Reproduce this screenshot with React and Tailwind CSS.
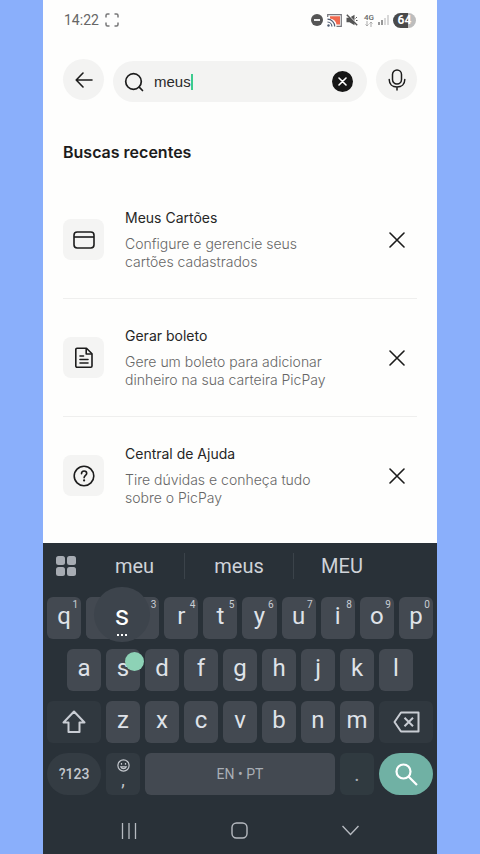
import React from 'react';

const recents = [
  { id: 'cards', title: 'Meus Cartões', lines: ['Configure e gerencie seus', 'cartões cadastrados'], Icon: CardIcon },
  { id: 'boleto', title: 'Gerar boleto', lines: ['Gere um boleto para adicionar', 'dinheiro na sua carteira PicPay'], Icon: FileIcon },
  { id: 'help', title: 'Central de Ajuda', lines: ['Tire dúvidas e conheça tudo', 'sobre o PicPay'], Icon: HelpIcon },
];

const topRow = [
  ['r', '4'], ['t', '5'], ['y', '6'], ['u', '7'], ['i', '8'], ['o', '9'], ['p', '0'],
];

function CardIcon() {
  return (
    <svg width="22" height="22" viewBox="0 0 22 22" fill="none" stroke="#1c1c1c" strokeWidth="1.6">
      <rect x="1" y="3" width="20" height="16" rx="3.2" />
      <path d="M1 8h20" />
    </svg>
  );
}

function FileIcon() {
  return (
    <svg width="22" height="22" viewBox="0 0 22 22" fill="none" stroke="#1c1c1c" strokeWidth="1.6" strokeLinejoin="round">
      <path d="M4 1.200h9.500L19 6.700V19a1.200 1.200 0 0 1-1.200 1.200H4A1.200 1.200 0 0 1 2.800 19V2.400A1.200 1.200 0 0 1 4 1.200Z" />
      <path d="M13.200 1.500V7H19" />
      <path d="M7 9h3.500M7 12.500h8M7 16h8" strokeLinecap="round" />
    </svg>
  );
}

function HelpIcon() {
  return (
    <svg width="22" height="22" viewBox="0 0 22 22" fill="none" stroke="#1c1c1c" strokeWidth="1.6">
      <circle cx="11" cy="11" r="9.8" />
      <path d="M8.500 8.700C8.500 7 9.600 6 11.100 6s2.600 1 2.600 2.400c0 1.900-2.600 2-2.600 4.300" strokeLinecap="round" />
      <circle cx="11.100" cy="15.400" r="1.100" fill="#1c1c1c" stroke="none" />
    </svg>
  );
}

function StatusBar() {
  return (
    <div className="flex h-10 items-center px-[21px] text-[#666]">
      <span className="text-[14px] leading-5">14:22</span>
      <svg className="ml-1.5" width="14" height="14" viewBox="0 0 14 14" fill="none" stroke="#777" strokeWidth="1.5">
        <path d="M1 4.500V2.500A1.500 1.500 0 0 1 2.500 1h2M9.500 1h2A1.500 1.500 0 0 1 13 2.500v2M13 9.500v2a1.500 1.500 0 0 1-1.500 1.500h-2M4.500 13h-2A1.500 1.500 0 0 1 1 11.500v-2" />
      </svg>
      <div className="ml-auto flex items-center">
        <svg width="12" height="12" viewBox="0 0 12 12">
          <circle cx="6" cy="6" r="6" fill="#555" />
          <path d="M3 6h6" stroke="#fff" strokeWidth="1.8" />
        </svg>
        <svg className="ml-1" width="15" height="13" viewBox="0 0 15 13" fill="none">
          <path d="M3 2.200h10v8.300H9.500C9 7 7 5 3 4.500Z" fill="#f0694f" />
          <path d="M.7 3V.7h13.600v11.600H9.500" stroke="#77777d" strokeWidth="1.200" />
          <path d="M.5 5.200a7.300 7.300 0 0 1 7.200 7.300M.5 8a4.500 4.500 0 0 1 4.400 4.500" stroke="#4d5a70" strokeWidth="1.200" />
          <circle cx="1.500" cy="11.500" r="1.200" fill="#4d5a70" />
        </svg>
        <svg className="ml-1" width="12" height="12" viewBox="0 0 12 12" fill="#555">
          <path d="M.5 3.800h3L8.500.8v10.400l-5-3h-3Z" />
          <path d="M1.500.5 12 11" stroke="#fff" strokeWidth="1.200" />
          <path d="M.8.8l10.400 10.400" stroke="#555" strokeWidth="1.500" />
          <path d="M9.500 4.500 11 3M10 6.500h1.500" stroke="#555" />
        </svg>
        <span className="ml-1.5 flex w-2.5 flex-col items-center text-[8px] leading-[7px] font-medium">
          4G
          <svg width="8" height="6" viewBox="0 0 8 6" fill="none" stroke="#aaa">
            <path d="M2 0v5M.5 3.500 2 5l1.500-1.500M6 6V1M4.500 2.500 6 1l1.500 1.500" />
          </svg>
        </span>
        <svg className="ml-1" width="11" height="10" viewBox="0 0 11 10">
          <path d="M1 7v3M4 5v5" stroke="#777" strokeWidth="1.500" />
          <path d="M7 3v7M10 0v10" stroke="#ccc" strokeWidth="1.500" />
        </svg>
        <span className="ml-1 flex h-[15px] w-[23px] items-center justify-center rounded-full bg-linear-to-r from-[#4a4a4a] from-64% to-[#bdbdbd] to-64% text-[12px] leading-none font-bold text-white">
          64
        </span>
      </div>
    </div>
  );
}

function SearchHeader() {
  return (
    <header className="flex items-start gap-[9px] px-5 pt-[19px]">
      <button aria-label="Voltar" className="flex size-[41px] shrink-0 items-center justify-center rounded-full bg-[#f3f3f2]">
        <svg width="18" height="16" viewBox="0 0 18 16" fill="none" stroke="#1c1c1c" strokeWidth="1.600" strokeLinecap="round" strokeLinejoin="round">
          <path d="M17 8H1.200M8 1 1.200 8 8 15" />
        </svg>
      </button>
      <div className="mt-0.5 flex h-[41px] min-w-0 flex-1 items-center rounded-full bg-[#f3f3f2] pr-3.5 pl-[11px]">
        <svg width="20" height="20" viewBox="0 0 20 20" fill="none" stroke="#1c1c1c" strokeWidth="1.700" strokeLinecap="round">
          <circle cx="9.500" cy="9.500" r="7.800" />
          <path d="m15.200 15.200 3.300 3.300" />
        </svg>
        <input
          type="text"
          aria-label="Buscar"
          defaultValue="meus"
          className="ml-2.5 field-sizing-content bg-transparent font-['Liberation_Sans',sans-serif] text-[15px] leading-5 text-[#2a2a2a] outline-none"
        />
        <span className="h-4 w-0.5 bg-[#3ccb8e]"></span>
        <button aria-label="Limpar" className="ml-auto flex size-[21px] shrink-0 items-center justify-center rounded-full bg-[#161616]">
          <svg width="9" height="9" viewBox="0 0 9 9" stroke="#fff" strokeWidth="1.600" strokeLinecap="round">
            <path d="m1 1 7 7M8 1 1 8" />
          </svg>
        </button>
      </div>
      <button aria-label="Buscar por voz" className="flex size-[41px] shrink-0 items-center justify-center rounded-full bg-[#f3f3f2]">
        <svg width="18" height="22" viewBox="0 0 18 22" fill="none" stroke="#1c1c1c" strokeWidth="1.500" strokeLinecap="round">
          <rect x="4.500" y="1" width="9" height="14" rx="4.500" />
          <path d="M1.200 10.500c0 4.600 3.200 7.500 7.800 7.500s7.800-2.900 7.800-7.500M9 18v3" />
        </svg>
      </button>
    </header>
  );
}

function RecentItem({ item }) {
  const { title, lines, Icon } = item;
  return (
    <li className="flex items-center border-b border-[#efefee] py-[27px] last:border-transparent">
      <span className="flex size-[41px] shrink-0 items-center justify-center rounded-lg bg-[#f4f4f3]">
        <Icon />
      </span>
      <div className="ml-[21px] flex-1">
        <h3 className="text-[14px] leading-5 text-[#262626]">{title}</h3>
        <p className="mt-[7px] text-[14px] leading-[18px] font-light text-[#666]">
          {lines[0]}
          <br />
          {lines[1]}
        </p>
      </div>
      <button aria-label={'Remover ' + title} className="flex size-[41px] shrink-0 items-center justify-center">
        <svg width="16" height="16" viewBox="0 0 16 16" stroke="#1c1c1c" strokeWidth="1.600" strokeLinecap="round">
          <path d="m1 1 14 14M15 1 1 15" />
        </svg>
      </button>
    </li>
  );
}

function Key({ label, hint, children }) {
  return (
    <button aria-label={label} className="relative flex h-[42px] flex-1 items-center justify-center rounded-md bg-[#434951] pb-1 text-[24px] leading-none text-[#dfe2e8]">
      {!children && label}
      {hint && <span className="absolute top-[3px] right-[3px] text-[10px] leading-none text-[#c9cdd4]">{hint}</span>}
      {children}
    </button>
  );
}

function Keyboard() {
  return (
    <section aria-label="Teclado" className="bg-[#293138] font-[Roboto,sans-serif]">
      <div className="grid h-[54px] grid-cols-[42fr_100fr_109fr_96fr_47fr] items-center pb-2 text-[20px] text-[#cfd3d9]">
        <button aria-label="Menu" className="flex justify-center pl-1">
          <svg width="20" height="20" viewBox="0 0 20 20" fill="#a7acb3">
            <rect x="0" y="0" width="9" height="9" rx="2.500" />
            <rect x="11" y="0" width="9" height="9" rx="2.500" />
            <rect x="0" y="11" width="9" height="9" rx="2.500" />
            <rect x="11" y="11" width="9" height="9" rx="2.500" />
          </svg>
        </button>
        <button className="h-[26px] border-r border-[#3b434a] leading-none">meu</button>
        <button className="h-[26px] border-r border-[#3b434a] leading-none">meus</button>
        <button className="h-[26px] leading-none">MEU</button>
      </div>

      <div className="space-y-2.5">
        <div className="grid grid-cols-10 gap-[5px] px-1">
          <Key label="q" hint="1" />
          {/* w and e sit under the popup of the pressed key */}
          <div className="relative col-span-2 flex rounded-md bg-[#434951]">
            <Key label="w">
              <span></span>
            </Key>
            <Key label="e" hint="3">
              <span></span>
            </Key>
            <span className="absolute -top-2.5 left-2 flex h-[55px] w-[56px] flex-col items-center rounded-full bg-[#3d444c] pt-[15px] text-[28px] leading-7 text-white">
              s
              <svg className="mt-1" width="12" height="2" viewBox="0 0 12 2" fill="#fff">
                <path d="M1 0h2v2H1zM5 0h2v2H5zM9 0h2v2H9z" />
              </svg>
            </span>
          </div>
          {topRow.map(([k, n]) => (
            <Key key={k} label={k} hint={n} />
          ))}
        </div>

        <div className="flex gap-[5px] px-6">
          <Key label="a" />
          <Key label="s">
            s
            <span className="absolute top-[3px] left-[19px] size-[19px] rounded-full bg-[#8dd2b6]"></span>
          </Key>
          {['d', 'f', 'g', 'h', 'j', 'k', 'l'].map((k) => (
            <Key key={k} label={k} />
          ))}
        </div>

        <div className="flex gap-[5px] px-1">
          <button aria-label="Shift" className="flex h-[42px] w-[54px] items-center justify-center rounded-md bg-[#30383f]">
            <svg width="24" height="24" viewBox="0 0 24 24" fill="none" stroke="#c9cdd4" strokeWidth="2" strokeLinejoin="round">
              <path d="M12 1.500 1.500 12.500H6.500V22h11v-9.500h5Z" />
            </svg>
          </button>
          {['z', 'x', 'c', 'v', 'b', 'n', 'm'].map((k) => (
            <Key key={k} label={k} />
          ))}
          <button aria-label="Apagar" className="flex h-[42px] w-[54px] items-center justify-center rounded-md bg-[#30383f]">
            <svg width="27" height="22" viewBox="0 0 27 22" fill="none" stroke="#c9cdd4" strokeWidth="2" strokeLinejoin="round">
              <path d="M8 1.500h17.500v19H8L1.500 11Z" />
              <path d="m11.500 6.800 8.500 8.500M20 6.800l-8.500 8.500" />
            </svg>
          </button>
        </div>

        <div className="flex gap-[5px] px-1">
          <button className="h-[42px] w-[54px] rounded-full bg-[#343c43] text-[14px] font-medium text-[#c3c7cd]">?123</button>
          <button aria-label="Emoji" className="flex h-[42px] w-[34px] flex-col items-center rounded-md bg-[#323a41] pt-1.5 text-[18px] leading-4 text-[#c3c7cd]">
            <svg width="13" height="13" viewBox="0 0 13 13" fill="none" stroke="#c3c7cd" strokeWidth="1.200">
              <circle cx="6.500" cy="6.500" r="5.600" />
              <path d="M3.700 7.800c.5 1.200 1.500 1.900 2.800 1.900s2.300-.7 2.800-1.900Z" />
              <path d="M4.500 4v1.700M8.500 4v1.700" />
            </svg>
            ,
          </button>
          <button className="h-[42px] flex-1 rounded-md bg-[#434951] text-[14px] text-[#a9aeb5]">EN • PT</button>
          <button className="h-[42px] w-[34px] rounded-md bg-[#303a40] text-[20px] text-[#a9aeb5]">.</button>
          <button aria-label="Pesquisar" className="flex h-[42px] w-[54px] items-center justify-center rounded-full bg-[#70b1a4]">
            <svg width="23" height="23" viewBox="0 0 23 23" fill="none" stroke="#fff" strokeWidth="2.200">
              <circle cx="8.500" cy="8.500" r="7" />
              <path d="m13.500 13.500 8.500 8.500" />
            </svg>
          </button>
        </div>
      </div>

      <nav className="grid h-[59px] grid-cols-3 items-center px-[31px] pt-4 pb-1">
        <button aria-label="Recentes" className="flex justify-center">
          <svg width="16" height="16" viewBox="0 0 16 16" stroke="#b6bac0" strokeWidth="1.300">
            <path d="M1.500 0v16M8 0v16M14.500 0v16" />
          </svg>
        </button>
        <button aria-label="Início" className="flex justify-center">
          <svg width="17" height="17" viewBox="0 0 17 17" fill="none" stroke="#b6bac0" strokeWidth="1.400">
            <rect x="1" y="1" width="15" height="15" rx="4.500" />
          </svg>
        </button>
        <button aria-label="Fechar teclado" className="flex justify-center">
          <svg width="17" height="11" viewBox="0 0 17 11" fill="none" stroke="#b6bac0" strokeWidth="1.400">
            <path d="m.5 1 8 8.500 8-8.500" />
          </svg>
        </button>
      </nav>
    </section>
  );
}

export default function App() {
  return (
    <div className="min-h-screen bg-[#8aaffb] px-[43px]">
      <div className="flex min-h-screen flex-col bg-[#fefefd] font-[Roboto,sans-serif]">
        <StatusBar />
        <SearchHeader />
        <main className="flex-1 px-5 pt-[38px] font-[Inter,sans-serif]">
          <h2 className="text-[16px] leading-6 font-semibold text-[#1c1c1c]">Buscas recentes</h2>
          <ul className="pt-[17px]">
            {recents.map((item) => (
              <RecentItem key={item.id} item={item} />
            ))}
          </ul>
        </main>
        <Keyboard />
      </div>
    </div>
  );
}
